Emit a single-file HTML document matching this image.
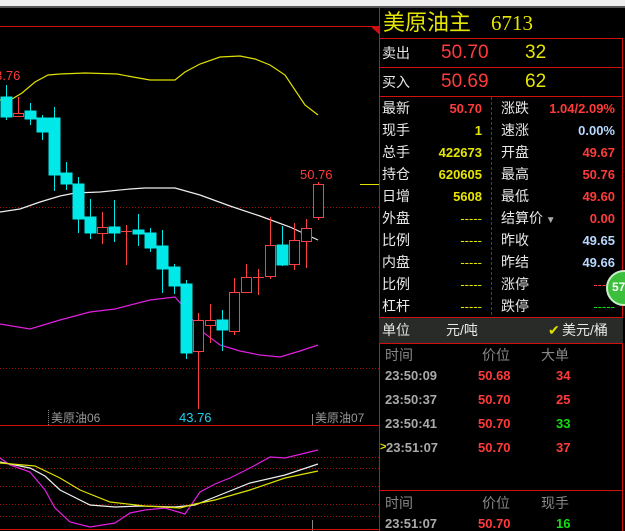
<!DOCTYPE html>
<html><head><meta charset="utf-8"><style>
*{margin:0;padding:0;box-sizing:border-box}
body{width:625px;height:531px;background:#000;overflow:hidden;position:relative;font-family:"Liberation Sans","Noto Sans CJK SC",sans-serif}
.t{position:absolute;white-space:nowrap;line-height:1}
.w{color:#e8e8e8}.r{color:#ff3b3b}.y{color:#e6e600}.b{color:#b8d8ff}.g{color:#10e010}.gr{color:#999}
.s{font-size:14px}.n{font-size:13px;font-weight:bold}
.d{font-weight:normal}
</style></head><body>
<div style="position:absolute;left:0;top:0;width:625px;height:6px;background:#eee"></div>
<div style="position:absolute;left:0;top:6px;width:625px;height:2px;background:#555"></div>
<svg width="380" height="531" style="position:absolute;left:0;top:0" shape-rendering="crispEdges">
<line x1="0" y1="26.5" x2="380" y2="26.5" stroke="#d01010"/>
<polygon points="370,26 380,26 380,35" fill="#d01010"/>
<line x1="0" y1="207.5" x2="380" y2="207.5" stroke="#a01010" stroke-dasharray="1,2"/>
<line x1="0" y1="368.5" x2="380" y2="368.5" stroke="#a01010" stroke-dasharray="1,2"/>
<line x1="360" y1="184.5" x2="380" y2="184.5" stroke="#e0e000"/>
<g shape-rendering="auto" fill="none" stroke-width="1.2">
<polyline stroke="#e0e000" points="0,100 12,99 22,93 35,82 48,75 60,74 85,73 117,74 133,77 150,80 175,80 185,72 200,64 220,57 240,56 255,59 270,65 285,75 295,90 305,105 318,115"/>
<polyline stroke="#eee" points="0,212 20,209 40,202 60,196 75,193 100,192 130,189 145,188 175,188 200,195 230,206 260,216 290,227 318,240"/>
<polyline stroke="#e020e0" points="0,324 30,329 60,320 90,312 115,309 150,300 175,297 182,305 200,330 220,345 240,351 260,355 280,357 300,351 318,345"/>
</g>
<g stroke="#00e8e8" fill="#00e8e8">
<line x1="6.5" y1="85" x2="6.5" y2="120"/><rect x="1" y="97" width="11" height="20"/>
<line x1="30.5" y1="103" x2="30.5" y2="125"/><rect x="25" y="111" width="11" height="8"/>
<line x1="42.5" y1="115" x2="42.5" y2="140"/><rect x="37" y="118" width="11" height="14"/>
<line x1="54.5" y1="107" x2="54.5" y2="191"/><rect x="49" y="118" width="11" height="57"/>
<line x1="66.5" y1="162" x2="66.5" y2="190"/><rect x="61" y="173" width="11" height="11"/>
<line x1="78.5" y1="177" x2="78.5" y2="233"/><rect x="73" y="184" width="11" height="35"/>
<line x1="90.5" y1="199" x2="90.5" y2="239"/><rect x="85" y="217" width="11" height="16"/>
<line x1="114.5" y1="200" x2="114.5" y2="242"/><rect x="109" y="227" width="11" height="6"/>
<line x1="138.5" y1="214" x2="138.5" y2="246"/><rect x="133" y="230" width="11" height="4"/>
<line x1="150.5" y1="228" x2="150.5" y2="252"/><rect x="145" y="233" width="11" height="15"/>
<line x1="162.5" y1="230" x2="162.5" y2="293"/><rect x="157" y="246" width="11" height="23"/>
<line x1="174.5" y1="264" x2="174.5" y2="294"/><rect x="169" y="267" width="11" height="19"/>
<line x1="186.5" y1="280" x2="186.5" y2="359"/><rect x="181" y="284" width="11" height="69"/>
<line x1="222.5" y1="310" x2="222.5" y2="351"/><rect x="217" y="320" width="11" height="10"/>
<line x1="282.5" y1="226" x2="282.5" y2="266"/><rect x="277" y="245" width="11" height="20"/>
</g>
<g stroke="#ff4040" fill="#000">
<line x1="18.5" y1="97" x2="18.5" y2="117"/><rect x="13.5" y="113.5" width="10" height="3"/>
<line x1="102.5" y1="212" x2="102.5" y2="244"/><rect x="97.5" y="227.5" width="10" height="6"/>
<line x1="126.5" y1="225" x2="126.5" y2="265"/><line x1="121" y1="231.5" x2="132" y2="231.5"/>
<line x1="198.5" y1="313" x2="198.5" y2="409"/><rect x="193.5" y="320.5" width="10" height="31"/>
<line x1="210.5" y1="304" x2="210.5" y2="343"/><rect x="205.5" y="320.5" width="10" height="5"/>
<line x1="234.5" y1="278" x2="234.5" y2="335"/><rect x="229.5" y="292.5" width="10" height="39"/>
<line x1="246.5" y1="264" x2="246.5" y2="293"/><rect x="241.5" y="277.5" width="10" height="15"/>
<line x1="258.5" y1="269" x2="258.5" y2="295"/><line x1="253" y1="277.5" x2="264" y2="277.5"/>
<line x1="270.5" y1="217" x2="270.5" y2="279"/><rect x="265.5" y="245.5" width="10" height="31"/>
<line x1="294.5" y1="223" x2="294.5" y2="270"/><rect x="289.5" y="240.5" width="10" height="24"/>
<line x1="306.5" y1="219" x2="306.5" y2="268"/><rect x="301.5" y="228.5" width="10" height="13"/>
<line x1="318.5" y1="182" x2="318.5" y2="220"/><rect x="313.5" y="184.5" width="10" height="33"/>
</g>
<line x1="0" y1="425.5" x2="380" y2="425.5" stroke="#d01010"/>
<line x1="48.5" y1="410" x2="48.5" y2="425" stroke="#888" stroke-dasharray="1,1"/>
<line x1="312.5" y1="414" x2="312.5" y2="425" stroke="#888"/>
<line x1="312.5" y1="520" x2="312.5" y2="531" stroke="#888"/>
<g stroke="#a01010" stroke-dasharray="1,2">
<line x1="0" y1="457.5" x2="380" y2="457.5"/><line x1="0" y1="468.5" x2="380" y2="468.5"/>
<line x1="0" y1="486.5" x2="380" y2="486.5"/><line x1="0" y1="504.5" x2="380" y2="504.5"/>
<line x1="0" y1="516.5" x2="380" y2="516.5"/></g>
<line x1="0" y1="529.5" x2="380" y2="529.5" stroke="#d01010"/>
<g shape-rendering="auto" fill="none" stroke-width="1.2">
<polyline stroke="#e020e0" points="0,458 10,465 30,472 45,490 55,508 70,522 90,527 115,523 130,513 145,510 165,508 185,514 200,492 215,484 230,478 250,468 270,457 285,458 318,450"/>
<polyline stroke="#eee" points="0,462 30,468 45,476 60,490 90,505 115,507 140,506 175,507 195,505 215,497 250,483 285,475 318,464"/>
<polyline stroke="#e0e000" points="0,463 35,466 60,478 80,490 110,502 145,506 180,508 195,504 215,500 250,490 285,478 318,471"/>
</g>
</svg>
<div class="t r" style="left:-5px;top:69px;font-size:13px">3.76</div>
<div class="t r" style="left:300px;top:168px;font-size:13px">50.76</div>
<div class="t" style="left:179px;top:411px;font-size:13px;color:#20d0f0">43.76</div>
<div class="t gr" style="left:51px;top:412px;font-size:12px">美原油06</div>
<div class="t gr" style="left:315px;top:412px;font-size:12px">美原油07</div>

<div style="position:absolute;left:379px;top:8px;width:1px;height:523px;background:#d01010"></div>
<div style="position:absolute;left:622px;top:38px;width:1px;height:493px;background:#d01010"></div>
<div style="position:absolute;left:379px;top:38px;width:244px;height:1px;background:#d01010"></div>
<div style="position:absolute;left:379px;top:67px;width:244px;height:1px;background:#d01010"></div>
<div style="position:absolute;left:379px;top:96px;width:244px;height:1px;background:#d01010"></div>
<div style="position:absolute;left:491px;top:97px;width:0;height:218px;border-left:1px dashed #c01010"></div>
<div class="t y" style="left:383px;top:12px;font-size:22px">美原油主</div>
<div class="t y" style="left:491px;top:13px;font-size:21px;font-family:'Liberation Serif',serif">6713</div>
<div class="t w" style="left:382px;top:46px;font-size:14px">卖出</div>
<div class="t r" style="left:441px;top:43px;font-size:19px">50.70</div>
<div class="t y" style="left:525px;top:43px;font-size:19px">32</div>
<div class="t w" style="left:382px;top:75px;font-size:14px">买入</div>
<div class="t r" style="left:441px;top:72px;font-size:19px">50.69</div>
<div class="t y" style="left:525px;top:72px;font-size:19px">62</div>

<div class="t w s" style="left:382px;top:101px">最新</div><div class="t r n" style="right:143px;top:102px">50.70</div>
<div class="t w s" style="left:501px;top:101px">涨跌</div><div class="t r n" style="right:10px;top:102px">1.04/2.09%</div>
<div class="t w s" style="left:382px;top:123px">现手</div><div class="t y n" style="right:143px;top:124px">1</div>
<div class="t w s" style="left:501px;top:123px">速涨</div><div class="t b n" style="right:10px;top:124px">0.00%</div>
<div class="t w s" style="left:382px;top:145px">总手</div><div class="t y n" style="right:143px;top:146px">422673</div>
<div class="t w s" style="left:501px;top:145px">开盘</div><div class="t r n" style="right:10px;top:146px">49.67</div>
<div class="t w s" style="left:382px;top:167px">持仓</div><div class="t y n" style="right:143px;top:168px">620605</div>
<div class="t w s" style="left:501px;top:167px">最高</div><div class="t r n" style="right:10px;top:168px">50.76</div>
<div class="t w s" style="left:382px;top:189px">日增</div><div class="t y n" style="right:143px;top:190px">5608</div>
<div class="t w s" style="left:501px;top:189px">最低</div><div class="t r n" style="right:10px;top:190px">49.60</div>
<div class="t w s" style="left:382px;top:211px">外盘</div><div class="t y n d" style="right:143px;top:212px">-----</div>
<div class="t w s" style="left:501px;top:211px">结算价<span style="color:#aaa;font-size:10px"> ▼</span></div><div class="t r n" style="right:10px;top:212px">0.00</div>
<div class="t w s" style="left:382px;top:233px">比例</div><div class="t y n d" style="right:143px;top:234px">-----</div>
<div class="t w s" style="left:501px;top:233px">昨收</div><div class="t b n" style="right:10px;top:234px">49.65</div>
<div class="t w s" style="left:382px;top:255px">内盘</div><div class="t y n d" style="right:143px;top:256px">-----</div>
<div class="t w s" style="left:501px;top:255px">昨结</div><div class="t b n" style="right:10px;top:256px">49.66</div>
<div class="t w s" style="left:382px;top:277px">比例</div><div class="t y n d" style="right:143px;top:278px">-----</div>
<div class="t w s" style="left:501px;top:277px">涨停</div><div class="t r n d" style="right:10px;top:278px">-----</div>
<div class="t w s" style="left:382px;top:299px">杠杆</div><div class="t y n d" style="right:143px;top:300px">-----</div>
<div class="t w s" style="left:501px;top:299px">跌停</div><div class="t g n d" style="right:10px;top:300px">-----</div>
<div style="position:absolute;left:606px;top:270px;width:36px;height:36px;border-radius:50%;background:#3cc03c;border:2px solid #c8f0c8"></div>
<div class="t" style="left:612px;top:281px;font-size:12px;font-weight:bold;color:#fff">57</div>

<div style="position:absolute;left:379px;top:317px;width:244px;height:27px;background:#282b28;border-top:1px solid #d01010;border-bottom:1px solid #d01010"></div>
<div class="t w s" style="left:382px;top:323px">单位</div>
<div class="t w s" style="left:446px;top:323px">元/吨</div>
<div class="t s" style="left:548px;top:323px;color:#e0e000">✔</div>
<div class="t w s" style="left:562px;top:323px">美元/桶</div>
<div class="t s" style="left:385px;top:348px;color:#888">时间</div>
<div class="t s" style="left:482px;top:348px;color:#888">价位</div>
<div class="t s" style="left:541px;top:348px;color:#888">大单</div>
<div class="t n" style="left:385px;top:369px;color:#aaa">23:50:09</div><div class="t r n" style="left:478px;top:369px">50.68</div><div class="t r n" style="left:556px;top:369px">34</div>
<div class="t n" style="left:385px;top:393px;color:#aaa">23:50:37</div><div class="t r n" style="left:478px;top:393px">50.70</div><div class="t r n" style="left:556px;top:393px">25</div>
<div class="t n" style="left:385px;top:417px;color:#aaa">23:50:41</div><div class="t r n" style="left:478px;top:417px">50.70</div><div class="t g n" style="left:556px;top:417px">33</div>
<div class="t y" style="left:380px;top:442px;font-size:11px;font-weight:bold">&gt;</div><div class="t n" style="left:386px;top:441px;color:#aaa">23:51:07</div><div class="t r n" style="left:478px;top:441px">50.70</div><div class="t r n" style="left:556px;top:441px">37</div>
<div style="position:absolute;left:379px;top:490px;width:244px;height:1px;background:#d01010"></div>
<div class="t s" style="left:385px;top:496px;color:#888">时间</div>
<div class="t s" style="left:482px;top:496px;color:#888">价位</div>
<div class="t s" style="left:541px;top:496px;color:#888">现手</div>
<div class="t n" style="left:385px;top:517px;color:#aaa">23:51:07</div><div class="t r n" style="left:478px;top:517px">50.70</div><div class="t g n" style="left:556px;top:517px">16</div>
</body></html>
